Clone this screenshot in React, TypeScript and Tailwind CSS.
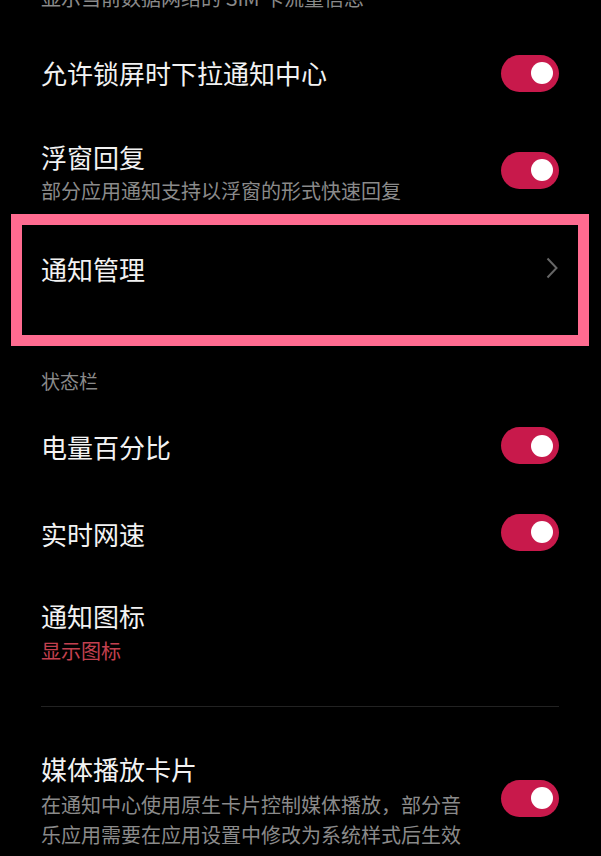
import { ReactNode } from 'react'

const font = { fontFamily: '"Noto Sans CJK SC", "Noto Sans", sans-serif' }

function Toggle() {
  return (
    <div className="flex h-[37px] w-[58px] shrink-0 items-center justify-end rounded-full bg-[#c8194b] pr-[6px]">
      <div className="h-[22px] w-[22px] rounded-full bg-white" />
    </div>
  )
}

function Title({ children }: { children: ReactNode }) {
  return <div className="text-[26px] leading-[34px] text-[#f2f2f2]">{children}</div>
}

function Sub({ children, red }: { children: ReactNode; red?: boolean }) {
  return (
    <div className={`text-[20px] leading-[30px] ${red ? 'text-[#c3404f]' : 'text-[#8a8a8a]'}`}>
      {children}
    </div>
  )
}

export default function App() {
  return (
    <div className="h-[856px] w-[601px] overflow-hidden bg-black" style={font}>
      {/* 上一项的说明文字（被截断） */}
      <div className="-mt-[17px] pl-[41px]">
        <Sub>显示当前数据网络的 SIM 卡流量信息</Sub>
      </div>

      <div className="flex h-[120px] items-center justify-between pl-[41px] pr-[42px]">
        <Title>允许锁屏时下拉通知中心</Title>
        <Toggle />
      </div>

      <div className="flex items-center justify-between pb-[8px] pl-[41px] pr-[42px] pt-[7px]">
        <div className="flex flex-col gap-[2px]">
          <Title>浮窗回复</Title>
          <Sub>部分应用通知支持以浮窗的形式快速回复</Sub>
        </div>
        <div className="-mt-[6px]">
          <Toggle />
        </div>
      </div>

      {/* 高亮框 */}
      <div className="ml-[11px] w-[578px] border-[11px] border-[#ff6b90]">
        <div className="flex h-[110px] items-start justify-between pl-[19px] pr-[20px] pt-[27px]">
          <Title>通知管理</Title>
          <svg width="12" height="22" viewBox="0 0 12 22" className="mt-[5px]">
            <path d="M1.5 1.5 L10.5 11 L1.5 20.5" fill="none" stroke="#666666" strokeWidth="2" />
          </svg>
        </div>
      </div>

      <div className="mt-[21px] pl-[41px] text-[19px] leading-[28px] text-[#8a8a8a]">状态栏</div>

      <div className="mt-[9px] flex h-[86px] items-center justify-between pl-[41px] pr-[42px]">
        <Title>电量百分比</Title>
        <div className="-mt-[3px]">
          <Toggle />
        </div>
      </div>

      <div className="flex h-[87px] items-center justify-between pl-[41px] pr-[42px]">
        <Title>实时网速</Title>
        <div className="-mt-[3px]">
          <Toggle />
        </div>
      </div>

      <div className="flex flex-col gap-[3px] pl-[41px] pt-[22px]">
        <Title>通知图标</Title>
        <Sub red>显示图标</Sub>
      </div>

      <div className="ml-[41px] mr-[42px] mt-[40px] h-px bg-[#222222]" />

      <div className="flex items-center justify-between pl-[41px] pr-[42px] pt-[45px]">
        <div className="flex flex-col gap-[4px]">
          <Title>媒体播放卡片</Title>
          <div className="w-[424px]">
            <Sub>在通知中心使用原生卡片控制媒体播放，部分音乐应用需要在应用设置中修改为系统样式后生效</Sub>
          </div>
        </div>
        <div className="-mt-[6px]">
          <Toggle />
        </div>
      </div>
    </div>
  )
}
